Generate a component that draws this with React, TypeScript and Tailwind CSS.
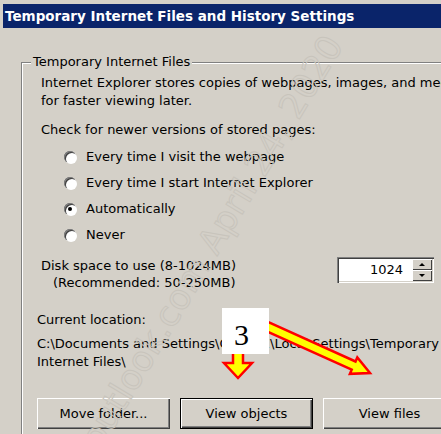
import React from 'react';

function Radio({ label, checked = false }: { label: string; checked?: boolean }) {
  return (
    <div className="flex items-center h-[26px] pl-[42px]">
      <span className="w-[12px] h-[12px] rounded-full bg-white flex items-center justify-center shadow-[inset_1px_1px_0_#808080,inset_2px_2px_0_#404040,1px_1px_0_#ffffff]">
        {checked && <span className="w-[4px] h-[4px] rounded-full bg-black" />}
      </span>
      <span className="ml-[10px]">{label}</span>
    </div>
  );
}

function Button({ label, isDefault = false }: { label: string; isDefault?: boolean }) {
  return (
    <div
      className={
        'w-[133px] h-[31px] shrink-0 flex items-center justify-center bg-[#d4d0c8] ' +
        (isDefault
          ? 'border border-black shadow-[inset_1px_1px_0_#ffffff,inset_-1px_-1px_0_#404040,inset_-2px_-2px_0_#808080]'
          : 'shadow-[inset_1px_1px_0_#ffffff,inset_-1px_-1px_0_#404040,inset_-2px_-2px_0_#808080]')
      }
    >
      {label}
    </div>
  );
}

function SpinBox() {
  return (
    <div className="w-[97px] h-[26px] flex bg-white shadow-[inset_1px_1px_0_#808080,inset_2px_2px_0_#404040,inset_-1px_-1px_0_#ffffff,inset_-2px_-2px_0_#d4d0c8] p-[2px]">
      <div className="flex-1 text-right pr-[9px] leading-[22px]">1024</div>
      <div className="w-[20px] flex flex-col">
        <div className="flex-1 bg-[#d4d0c8] flex items-center justify-center shadow-[inset_1px_1px_0_#ffffff,inset_-1px_-1px_0_#404040]">
          <span className="w-0 h-0 border-l-[3px] border-r-[3px] border-b-[3px] border-l-transparent border-r-transparent border-b-black" />
        </div>
        <div className="flex-1 bg-[#d4d0c8] flex items-center justify-center shadow-[inset_1px_1px_0_#ffffff,inset_-1px_-1px_0_#404040]">
          <span className="w-0 h-0 border-l-[3px] border-r-[3px] border-t-[3px] border-l-transparent border-r-transparent border-t-black" />
        </div>
      </div>
    </div>
  );
}

export default function App() {
  return (
    <div className="relative w-[441px] h-[434px] overflow-hidden bg-[#d4d0c8] text-black text-[13px] font-['DejaVu_Sans',sans-serif]">
      {/* title bar */}
      <div className="pt-[4px] pl-[3px]">
        <div className="h-[24px] bg-[#0a246a] text-white font-bold text-[13.5px] leading-[24px] pl-[2px] whitespace-nowrap">
          Temporary Internet Files and History Settings
        </div>
      </div>

      {/* group box */}
      <div className="ml-[21px] mt-[34px] w-[470px] h-[400px] border border-[#808080] shadow-[inset_1px_1px_0_#ffffff,1px_1px_0_#ffffff]">
        <div className="flex -mt-[10px]">
          <span className="ml-[9px] px-[2px] leading-[18px] bg-[#d4d0c8]">Temporary Internet Files</span>
        </div>

        <div className="pl-[19px] mt-[3px] leading-[18px] whitespace-nowrap">
          <div>Internet Explorer stores copies of webpages, images, and media</div>
          <div>for faster viewing later.</div>
          <div className="mt-[11px]">Check for newer versions of stored pages:</div>
        </div>

        <div className="mt-[5px] whitespace-nowrap">
          <Radio label="Every time I visit the webpage" />
          <Radio label="Every time I start Internet Explorer" />
          <Radio label="Automatically" checked />
          <Radio label="Never" />
        </div>

        <div className="flex mt-[9px] pl-[19px] whitespace-nowrap">
          <div className="w-[296px] leading-[17px]">
            <div>Disk space to use (8-1024MB)</div>
            <div className="pl-[12px]">(Recommended: 50-250MB)</div>
          </div>
          <SpinBox />
        </div>

        <div className="pl-[15px] mt-[20px] leading-[18px] whitespace-nowrap">
          <div>Current location:</div>
          <div className="mt-[6px]">
            C:\Documents and Settings\Owner1\Local Settings\Temporary
            <br />
            Internet Files\
          </div>
        </div>

        <div className="flex gap-[10px] pl-[15px] mt-[27px]">
          <Button label="Move folder..." />
          <Button label="View objects" isDefault />
          <Button label="View files" />
        </div>
      </div>

      {/* watermark */}
      <div className="absolute left-[212px] top-[242px] -translate-x-1/2 -translate-y-1/2 -rotate-[59deg] pointer-events-none whitespace-nowrap text-[35px] text-transparent [-webkit-text-stroke:1px_#c8c4bc] font-['DejaVu_Sans',sans-serif]">
        outlook.com April 24, 2020
      </div>

      {/* annotation */}
      <svg className="absolute left-0 top-0 pointer-events-none" width="441" height="434" viewBox="0 0 441 434">
        <polygon
          points="267.9,321.9 355.5,361.5 357.3,357.4 370,373 349.9,373.8 351.7,369.7 264.1,330.1"
          fill="#ffff00"
          stroke="#ff0000"
          strokeWidth="2.5"
        />
        <polygon
          points="233,350 243,350 243,363 252,363 238,378 224,363 233,363"
          fill="#ffff00"
          stroke="#ff0000"
          strokeWidth="2.5"
        />
      </svg>
      <div className="absolute left-[222px] top-[308px] w-[47px] h-[46px] bg-white flex items-center justify-center pr-[8px] pt-[8px] font-['Liberation_Serif',serif] text-[30px] leading-none">
        3
      </div>
    </div>
  );
}
